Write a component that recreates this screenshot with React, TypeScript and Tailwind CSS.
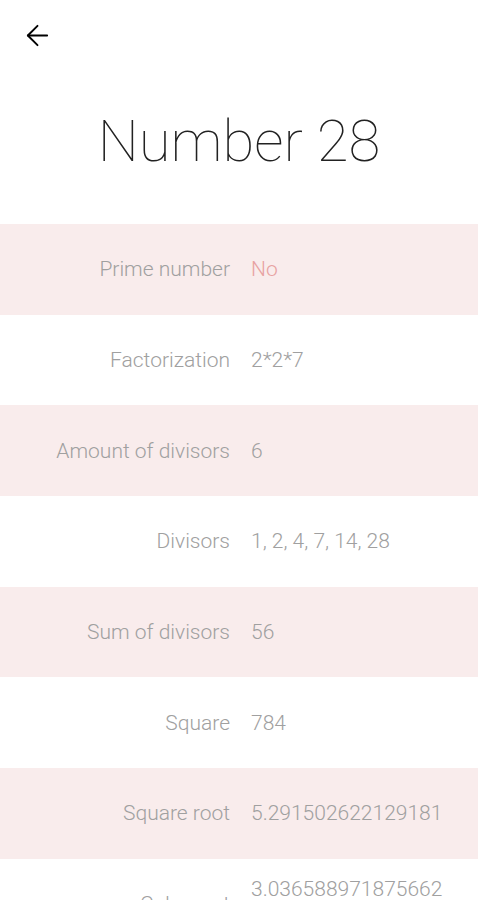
import { ArrowLeft } from 'lucide-react';

interface Row {
  label: string;
  value: string;
  accent?: boolean;
}

const rows: Row[] = [
  { label: 'Prime number', value: 'No', accent: true },
  { label: 'Factorization', value: '2*2*7' },
  { label: 'Amount of divisors', value: '6' },
  { label: 'Divisors', value: '1, 2, 4, 7, 14, 28' },
  { label: 'Sum of divisors', value: '56' },
  { label: 'Square', value: '784' },
  { label: 'Square root', value: '5.291502622129181' },
  { label: 'Cube root', value: '3.0365889718756627' },
];

export default function App() {
  return (
    <div className="h-[900px] w-[478px] overflow-hidden bg-white font-['Roboto',sans-serif]">
      <div className="flex h-[70px] items-center pl-[21px]">
        <button type="button" className="text-black">
          <ArrowLeft size={33} strokeWidth={1.4} />
        </button>
      </div>
      <h1 className="pt-[31px] pb-[43px] text-center text-[58px] font-thin leading-[80px] text-[#222]">
        Number 28
      </h1>
      <div>
        {rows.map((row, i) => (
          <div
            key={row.label}
            className={`flex min-h-[90.67px] items-center text-[21px] font-light leading-[30px] ${
              i % 2 === 0 ? 'bg-[#f9ecec]' : 'bg-white'
            }`}
          >
            <div className="w-[230px] shrink-0 text-right text-[#a0a0a0]">{row.label}</div>
            <div
              className={`flex-1 break-all pl-[21px] pr-[30px] ${
                row.accent ? 'text-[#e8a2a2]' : 'text-[#a0a0a0]'
              }`}
            >
              {row.value}
            </div>
          </div>
        ))}
      </div>
    </div>
  );
}
